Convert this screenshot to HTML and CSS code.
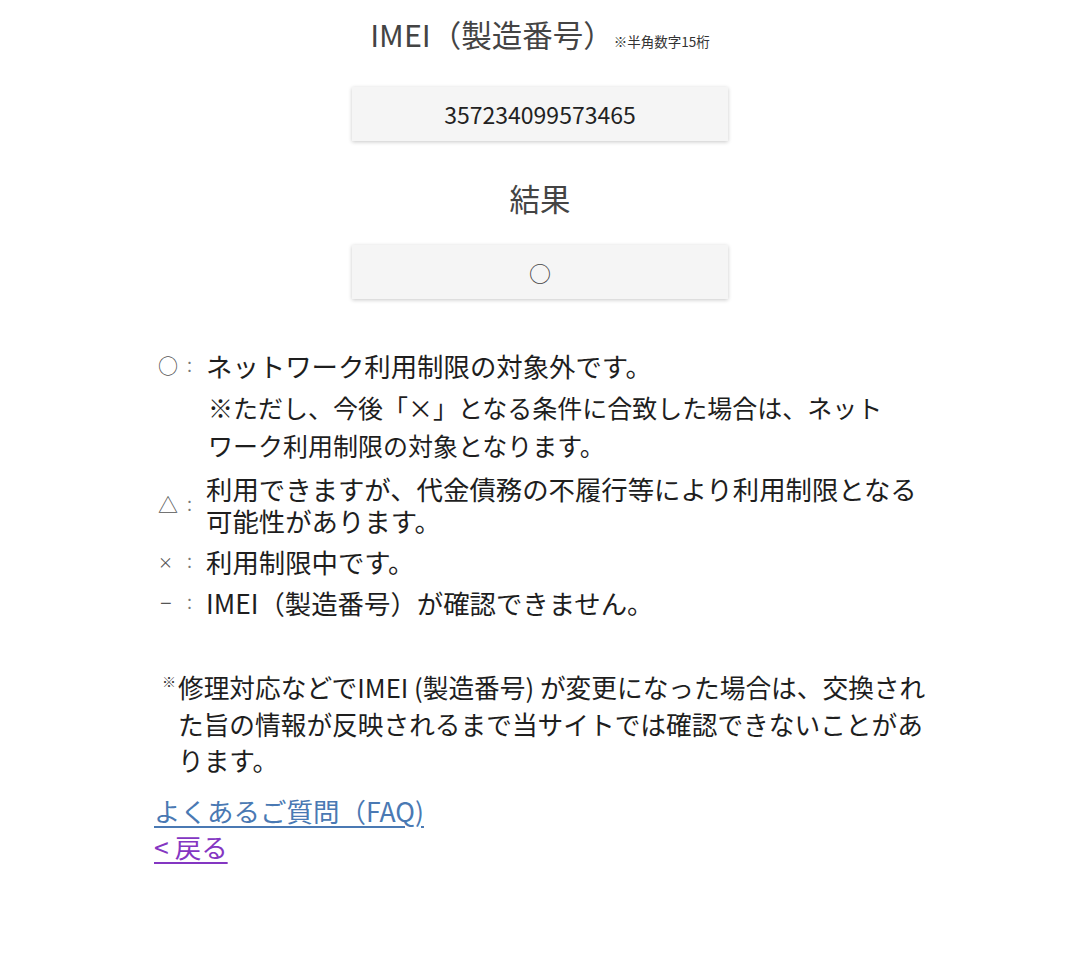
FILE: index.html
```html
<!DOCTYPE html>
<html lang="ja">
<head>
<meta charset="utf-8">
<title>IMEI 確認結果</title>
<link rel="stylesheet" href="styles.css">
</head>
<body>
<main class="page">
  <h2 class="heading">IMEI（製造番号）<small class="heading-note">※半角数字15桁</small></h2>
  <div class="field">357234099573465</div>

  <h2 class="heading heading-result">結果</h2>
  <div class="field field-result">○</div>

  <ul class="legend">
    <li class="legend-row">
      <span class="sym">○</span><span class="colon">：</span>
      <div class="desc">
        <p class="desc-main">ネットワーク利用制限の対象外です。</p>
        <p class="desc-sub">※ただし、今後「×」となる条件に合致した場合は、ネットワーク利用制限の対象となります。</p>
      </div>
    </li>
    <li class="legend-row legend-center">
      <span class="sym">△</span><span class="colon">：</span>
      <div class="desc"><p class="desc-main">利用できますが、代金債務の不履行等により利用制限となる可能性があります。</p></div>
    </li>
    <li class="legend-row legend-center">
      <span class="sym sym-x">×</span><span class="colon">：</span>
      <div class="desc"><p class="desc-main">利用制限中です。</p></div>
    </li>
    <li class="legend-row legend-center">
      <span class="sym sym-dash">−</span><span class="colon">：</span>
      <div class="desc"><p class="desc-main">IMEI（製造番号）が確認できません。</p></div>
    </li>
  </ul>

  <div class="notice">
    <span class="notice-mark">※</span>
    <p class="notice-text">修理対応などでIMEI (製造番号) が変更になった場合は、交換された旨の情報が反映されるまで当サイトでは確認できないことがあります。</p>
  </div>

  <nav class="links">
    <a class="link link-faq" href="#faq">よくあるご質問（FAQ)</a>
    <a class="link link-back" href="#back">&lt; 戻る</a>
  </nav>
</main>
</body>
</html>
```
FILE: styles.css
```css
html, body {
  margin: 0;
  padding: 0;
  background: #ffffff;
}

body {
  font-family: "Noto Sans CJK JP", "Noto Sans", sans-serif;
  color: #222222;
}

.page {
  width: 772px;
  margin: 0 auto;
  padding-top: 13px;
  display: flex;
  flex-direction: column;
  align-items: center;
}

.heading {
  margin: 0;
  font-size: 30.5px;
  font-weight: 400;
  line-height: 42px;
  color: #444444;
  text-align: center;
}

.heading-note {
  font-size: 13.5px;
  color: #333333;
}

.heading-result {
  margin-top: 36px;
}

.field {
  margin-top: 25px;
  width: 376px;
  height: 54px;
  background: #f5f5f5;
  box-shadow: 0 1px 4px rgba(0, 0, 0, 0.22);
  display: flex;
  align-items: center;
  justify-content: center;
  font-size: 23px;
  color: #222222;
}

.field-result {
  margin-top: 26px;
  font-size: 22px;
  color: #444444;
}

.legend {
  align-self: stretch;
  list-style: none;
  margin: 51px 0 0;
  padding: 0 0 0 4px;
  display: flex;
  flex-direction: column;
  gap: 9px;
}

.legend-row {
  display: flex;
  align-items: flex-start;
}

.legend-center {
  align-items: center;
}

.sym {
  width: 24px;
  font-size: 20px;
  line-height: 32px;
  color: #555555;
}

.sym-x {
  font-size: 15px;
}

.sym-dash {
  font-family: "Liberation Sans", sans-serif;
  font-size: 20px;
  padding-left: 2px;
  box-sizing: border-box;
}

.colon {
  width: 24px;
  font-size: 15px;
  line-height: 32px;
  color: #777777;
}

.desc {
  width: 720px;
}

.desc p {
  margin: 0;
}

.desc-main {
  font-size: 26.4px;
  line-height: 32px;
  color: #1e1e1e;
}

.desc-sub {
  margin-top: 6px !important;
  padding: 0 24px 0 2px;
  font-size: 25px;
  line-height: 38px;
  color: #1e1e1e;
}

.notice {
  align-self: stretch;
  margin-top: 50px;
  display: flex;
  align-items: flex-start;
}

.notice-mark {
  width: 24px;
  padding-left: 8px;
  box-sizing: border-box;
  font-size: 14px;
  line-height: 24px;
  color: #333333;
}

.notice-text {
  margin: 0;
  width: 750px;
  font-size: 25.7px;
  line-height: 36.5px;
  color: #1e1e1e;
}

.links {
  align-self: stretch;
  margin-top: 14px;
  display: flex;
  flex-direction: column;
  align-items: flex-start;
}

.link {
  font-size: 26.5px;
  line-height: 36px;
  text-underline-offset: 4px;
}

.link-faq {
  color: #4a79b3;
}

.link-back {
  color: #8436c2;
}
```
